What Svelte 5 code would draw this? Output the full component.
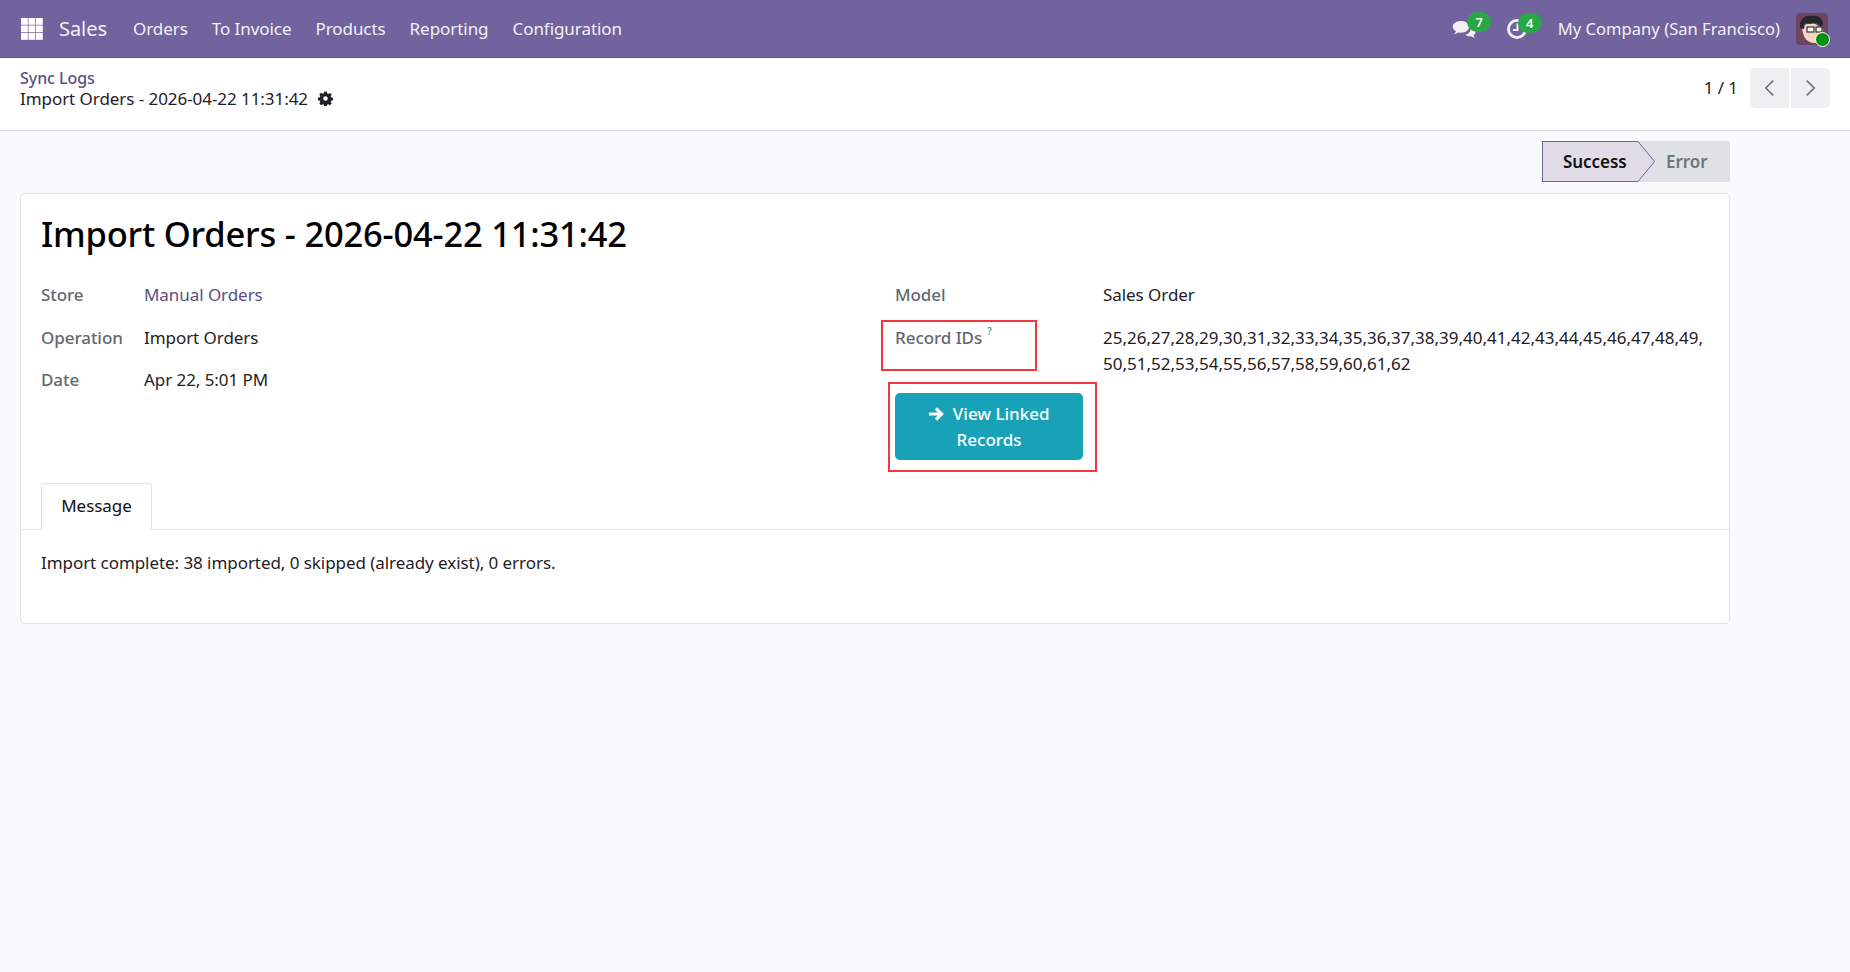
<script>
  const menus = ['Orders', 'To Invoice', 'Products', 'Reporting', 'Configuration'];
  const leftFields = [
    { label: 'Store', value: 'Manual Orders', link: true },
    { label: 'Operation', value: 'Import Orders' },
    { label: 'Date', value: 'Apr 22, 5:01 PM' }
  ];
</script>

<div class="page">
  <header class="nav">
    <svg class="apps" viewBox="0 0 22 22" width="22" height="22" aria-hidden="true">
      {#each [0, 7.5, 15] as y}
        {#each [0, 7.5, 15] as x}
          <rect {x} {y} width="6.8" height="6.8" fill="#fff" />
        {/each}
      {/each}
    </svg>
    <span class="brand">Sales</span>
    <nav class="menu">
      {#each menus as m}<span>{m}</span>{/each}
    </nav>
    <div class="systray">
      <div class="tray-icon chat">
        <svg viewBox="0 0 28 22" width="25" height="20" aria-hidden="true">
          <path fill="#f3f1f7" d="M10 2c5.200 0 9.200 2.900 9.200 6.600s-4 6.600-9.200 6.600c-1 0-2-.1-2.900-.3-1.300 1-2.900 1.700-4.700 1.900 1-1 1.700-2.100 2-3.300C2.200 12.300.8 10.600.8 8.600.8 4.900 4.800 2 10 2z" />
          <path fill="#f3f1f7" d="M21 8.500c3.300.6 5.600 2.800 5.600 5.300 0 1.700-1 3.100-2.600 4.100.2 1 .8 2 1.700 2.800-1.700-.1-3.200-.8-4.300-1.700-2.500.3-5-.3-6.800-1.600 3.900-.5 6.900-3.100 6.400-8.900z" />
        </svg>
        <b class="badge">7</b>
      </div>
      <div class="tray-icon clock">
        <svg viewBox="0 0 22 22" width="22" height="22" aria-hidden="true">
          <circle cx="11" cy="11" r="8.600" fill="none" stroke="#f3f1f7" stroke-width="2.800" />
          <path d="M11.500 5.500v6.500H7" fill="none" stroke="#f3f1f7" stroke-width="2" />
        </svg>
        <b class="badge">4</b>
      </div>
      <span class="company">My Company (San Francisco)</span>
      <div class="avatar">
        <svg viewBox="0 0 32 32" width="32" height="32" aria-hidden="true">
          <rect width="32" height="32" rx="4" fill="#6d4560" />
          <path d="M6 13c0 9 4 17 12 17s9-7 9-14L16 9z" fill="#f6d5bb" />
          <path d="M4 15C3 7 8 2 16 3c5-1 11 1 11 9l-3 1-3-3c-4 1-9 1-12 0l-1 6z" fill="#26262c" />
          <rect x="11" y="14" width="7" height="5" fill="#f4f0ea" stroke="#33333a" stroke-width="1.200" />
          <rect x="20" y="14" width="6" height="5" fill="#f4f0ea" stroke="#33333a" stroke-width="1.200" />
        </svg>
        <i class="online"></i>
      </div>
    </div>
  </header>

  <section class="control">
    <div class="crumbs">
      <a href="#top">Sync Logs</a>
      <div class="current">
        <span>Import Orders - 2026-04-22 11:31:42</span>
        <svg viewBox="0 0 16 16" width="15" height="15" aria-hidden="true">
          <path fill="#1f1f24" fill-rule="evenodd" d="M6.700.5h2.600l.4 2 1.300.6 1.800-1.100 1.800 1.800-1.100 1.800.6 1.300 2 .4v2.600l-2 .4-.6 1.300 1.100 1.800-1.800 1.800-1.800-1.100-1.300.6-.4 2H6.700l-.4-2-1.300-.6-1.800 1.100-1.800-1.800 1.100-1.800-.6-1.300-2-.4V7.100l2-.4.6-1.300L1.400 3.600l1.800-1.800L5 2.900l1.300-.6zM8 5.600a2.400 2.400 0 1 0 0 4.800 2.400 2.400 0 0 0 0-4.800z" />
        </svg>
      </div>
    </div>
    <div class="pager">
      <span class="count">1 / 1</span>
      <div class="pager-btns">
        <button aria-label="Previous">
          <svg viewBox="0 0 14 20" width="13" height="20"><path d="M11 2 3 10l8 8" fill="none" stroke="#6c7076" stroke-width="1.700" /></svg>
        </button>
        <button aria-label="Next">
          <svg viewBox="0 0 14 20" width="13" height="20"><path d="m3 2 8 8-8 8" fill="none" stroke="#6c7076" stroke-width="1.700" /></svg>
        </button>
      </div>
    </div>
  </section>

  <main class="content">
    <div class="statusbar">
      <div class="status">
        <div class="st st-active">Success</div>
        <svg class="arrow" viewBox="0 0 18 41" width="18" height="41" aria-hidden="true">
          <path d="M0 0h1l16.500 20.500L1 41H0z" fill="#dfdce8" />
          <path d="M0 .5h1l16.500 20L1 40.500H0" fill="none" stroke="#71639e" stroke-width="1" />
        </svg>
        <div class="st st-idle">Error</div>
      </div>
    </div>

    <div class="sheet">
      <h1>Import Orders - 2026-04-22 11:31:42</h1>
      <div class="groups">
        <div class="group left">
          {#each leftFields as f}
            <div class="lbl">{f.label}</div>
            <div class="val" class:link={f.link}>{f.value}</div>
          {/each}
        </div>
        <div class="group right">
          <div class="lbl">Model</div>
          <div class="val">Sales Order</div>
          <div class="lbl marked">
            Record IDs<sup>?</sup>
            <span class="redbox box-ids"></span>
          </div>
          <div class="val ids">25,26,27,28,29,30,31,32,33,34,35,36,37,38,39,40,41,42,43,44,45,46,47,48,49,<br />50,51,52,53,54,55,56,57,58,59,60,61,62</div>
          <div class="action">
            <button class="linked">
              <svg viewBox="0 0 16 16" width="16" height="16" aria-hidden="true">
                <path d="M1 8h12.500M8 2.400 13.600 8 8 13.600" fill="none" stroke="#fff" stroke-width="3.200" />
              </svg>
              View Linked Records
            </button>
            <span class="redbox box-btn"></span>
          </div>
        </div>
      </div>

      <div class="tabs"><div class="tab">Message</div></div>
      <div class="pane">Import complete: 38 imported, 0 skipped (already exist), 0 errors.</div>
    </div>
  </main>
</div>

<style>
  :global(body) {
    margin: 0;
    background: #f9fafb;
  }
  .page {
    height: 972px;
    overflow: hidden;
    font-family: "Noto Sans", "Open Sans", sans-serif;
    font-size: 17px;
    letter-spacing: -0.06px;
    color: #1f2024;
    background: #f9fafb;
  }
  .nav {
    height: 58px;
    box-sizing: border-box;
    display: flex;
    align-items: center;
    background: #71639e;
    border-bottom: 1px solid #665990;
    color: #f3f1f7;
    padding-left: 21px;
  }
  .apps { flex: none; }
  .brand {
    margin-left: 16px;
    font-size: 20px;
  }
  .menu {
    display: flex;
    gap: 24px;
    margin-left: 26px;
  }
  .systray {
    margin-left: auto;
    display: flex;
    align-items: center;
    padding-right: 22px;
  }
  .tray-icon {
    position: relative;
    display: flex;
  }
  .chat { margin-right: 29px; }
  .clock { margin-right: 30px; }
  .badge {
    position: absolute;
    top: -6.500px;
    left: 15.500px;
    width: 24px;
    height: 20px;
    border-radius: 10px;
    background: #28a745;
    color: #fff;
    font-size: 13px;
    font-weight: 600;
    line-height: 20px;
    text-align: center;
  }
  .clock .badge { left: 12px; top: -5px; }
  .company { font-size: 16.600px; letter-spacing: 0; }
  .avatar {
    position: relative;
    display: flex;
    margin-left: 16px;
  }
  .online {
    position: absolute;
    right: -2px;
    bottom: -2px;
    box-sizing: border-box;
    width: 15px;
    height: 15px;
    border-radius: 50%;
    background: #008f0e;
    border: 1.500px solid #fff;
  }
  .control {
    height: 73px;
    box-sizing: border-box;
    display: flex;
    justify-content: space-between;
    background: #fff;
    border-bottom: 1px solid #d8dadd;
    padding: 10px 20px 0;
  }
  .crumbs a {
    display: block;
    color: #5b4f85;
    font-weight: 500;
    font-size: 16px;
    line-height: 20px;
    text-decoration: none;
  }
  .current {
    display: flex;
    align-items: center;
    gap: 10px;
    line-height: 21px;
  }
  .pager {
    display: flex;
    align-items: flex-start;
    gap: 12px;
  }
  .count { line-height: 40px; }
  .pager-btns {
    display: flex;
    gap: 2px;
  }
  .pager-btns button {
    width: 39px;
    height: 40px;
    border: 0;
    padding: 0;
    background: #eeeff1;
    display: flex;
    align-items: center;
    justify-content: center;
  }
  .pager-btns button:first-child { border-radius: 5px 0 0 5px; }
  .pager-btns button:last-child { border-radius: 0 5px 5px 0; }
  .content { padding: 10px 120px 0 20px; }
  .statusbar {
    display: flex;
    justify-content: flex-end;
  }
  .status {
    display: flex;
    height: 41px;
    border-radius: 2px;
    font-weight: 600;
    background: #dee1e5;
  }
  .st {
    display: flex;
    align-items: center;
    box-sizing: border-box;
  }
  .st-active {
    width: 96px;
    padding-left: 20px;
    color: #111;
    background: #dfdce8;
    border: 1px solid #71639e;
    border-right: 0;
  }
  .arrow { flex: none; margin-left: -1px; }
  .st-idle {
    width: 75px;
    padding-left: 11px;
    color: #6c757d;
  }
  .sheet {
    margin-top: 11px;
    height: 431px;
    box-sizing: border-box;
    background: #fff;
    border: 1px solid #dee1e5;
    border-radius: 5px;
    padding-top: 14px;
  }
  h1 {
    margin: 0 0 0 20px;
    font-size: 34.500px;
    line-height: 52px;
    font-weight: 500;
    color: #000;
    letter-spacing: -0.2px;
  }
  .groups {
    display: flex;
    margin-top: 22px;
    padding-left: 20px;
    height: 201px;
  }
  .group { display: grid; align-content: start; row-gap: 16.500px; }
  .left {
    width: 854px;
    grid-template-columns: 103px 1fr;
  }
  .right {
    flex: 1;
    grid-template-columns: 208px 1fr;
  }
  .lbl {
    color: #63686e;
    font-weight: 500;
    line-height: 26px;
    position: relative;
  }
  .val { line-height: 26px; }
  .link { color: #5b4f85; }
  .ids {
    letter-spacing: 0;
    white-space: nowrap;
  }
  sup {
    color: #17a2b8;
    font-size: 10px;
    line-height: 0;
    margin-left: 5px;
    position: relative;
    top: -2px;
    vertical-align: super;
  }
  .action {
    position: relative;
    grid-column: 1;
  }
  .linked {
    display: block;
    width: 188px;
    height: 67px;
    border: 0;
    border-radius: 5px;
    background: #17a2b8;
    color: #fff;
    font: inherit;
    font-weight: 500;
    line-height: 26px;
    padding: 0 20px;
  }
  .linked svg {
    vertical-align: -2px;
    margin-right: 4px;
  }
  .redbox {
    position: absolute;
    box-sizing: border-box;
    border: 2px solid #f4363c;
    pointer-events: none;
  }
  .box-ids {
    left: -14px;
    top: -5px;
    width: 156px;
    height: 51px;
  }
  .box-btn {
    left: -7px;
    top: -11px;
    width: 209px;
    height: 90px;
  }
  .tabs {
    height: 46px;
    border-bottom: 1px solid #dee1e5;
    padding-left: 20px;
    display: flex;
  }
  .tab {
    width: 111px;
    height: 47px;
    box-sizing: border-box;
    background: #fff;
    border: 1px solid #dee1e5;
    border-bottom: 0;
    border-radius: 4px 4px 0 0;
    text-align: center;
    line-height: 44px;
    color: #111;
  }
  .pane {
    padding: 20px 20px 0;
    line-height: 26px;
  }
</style>
